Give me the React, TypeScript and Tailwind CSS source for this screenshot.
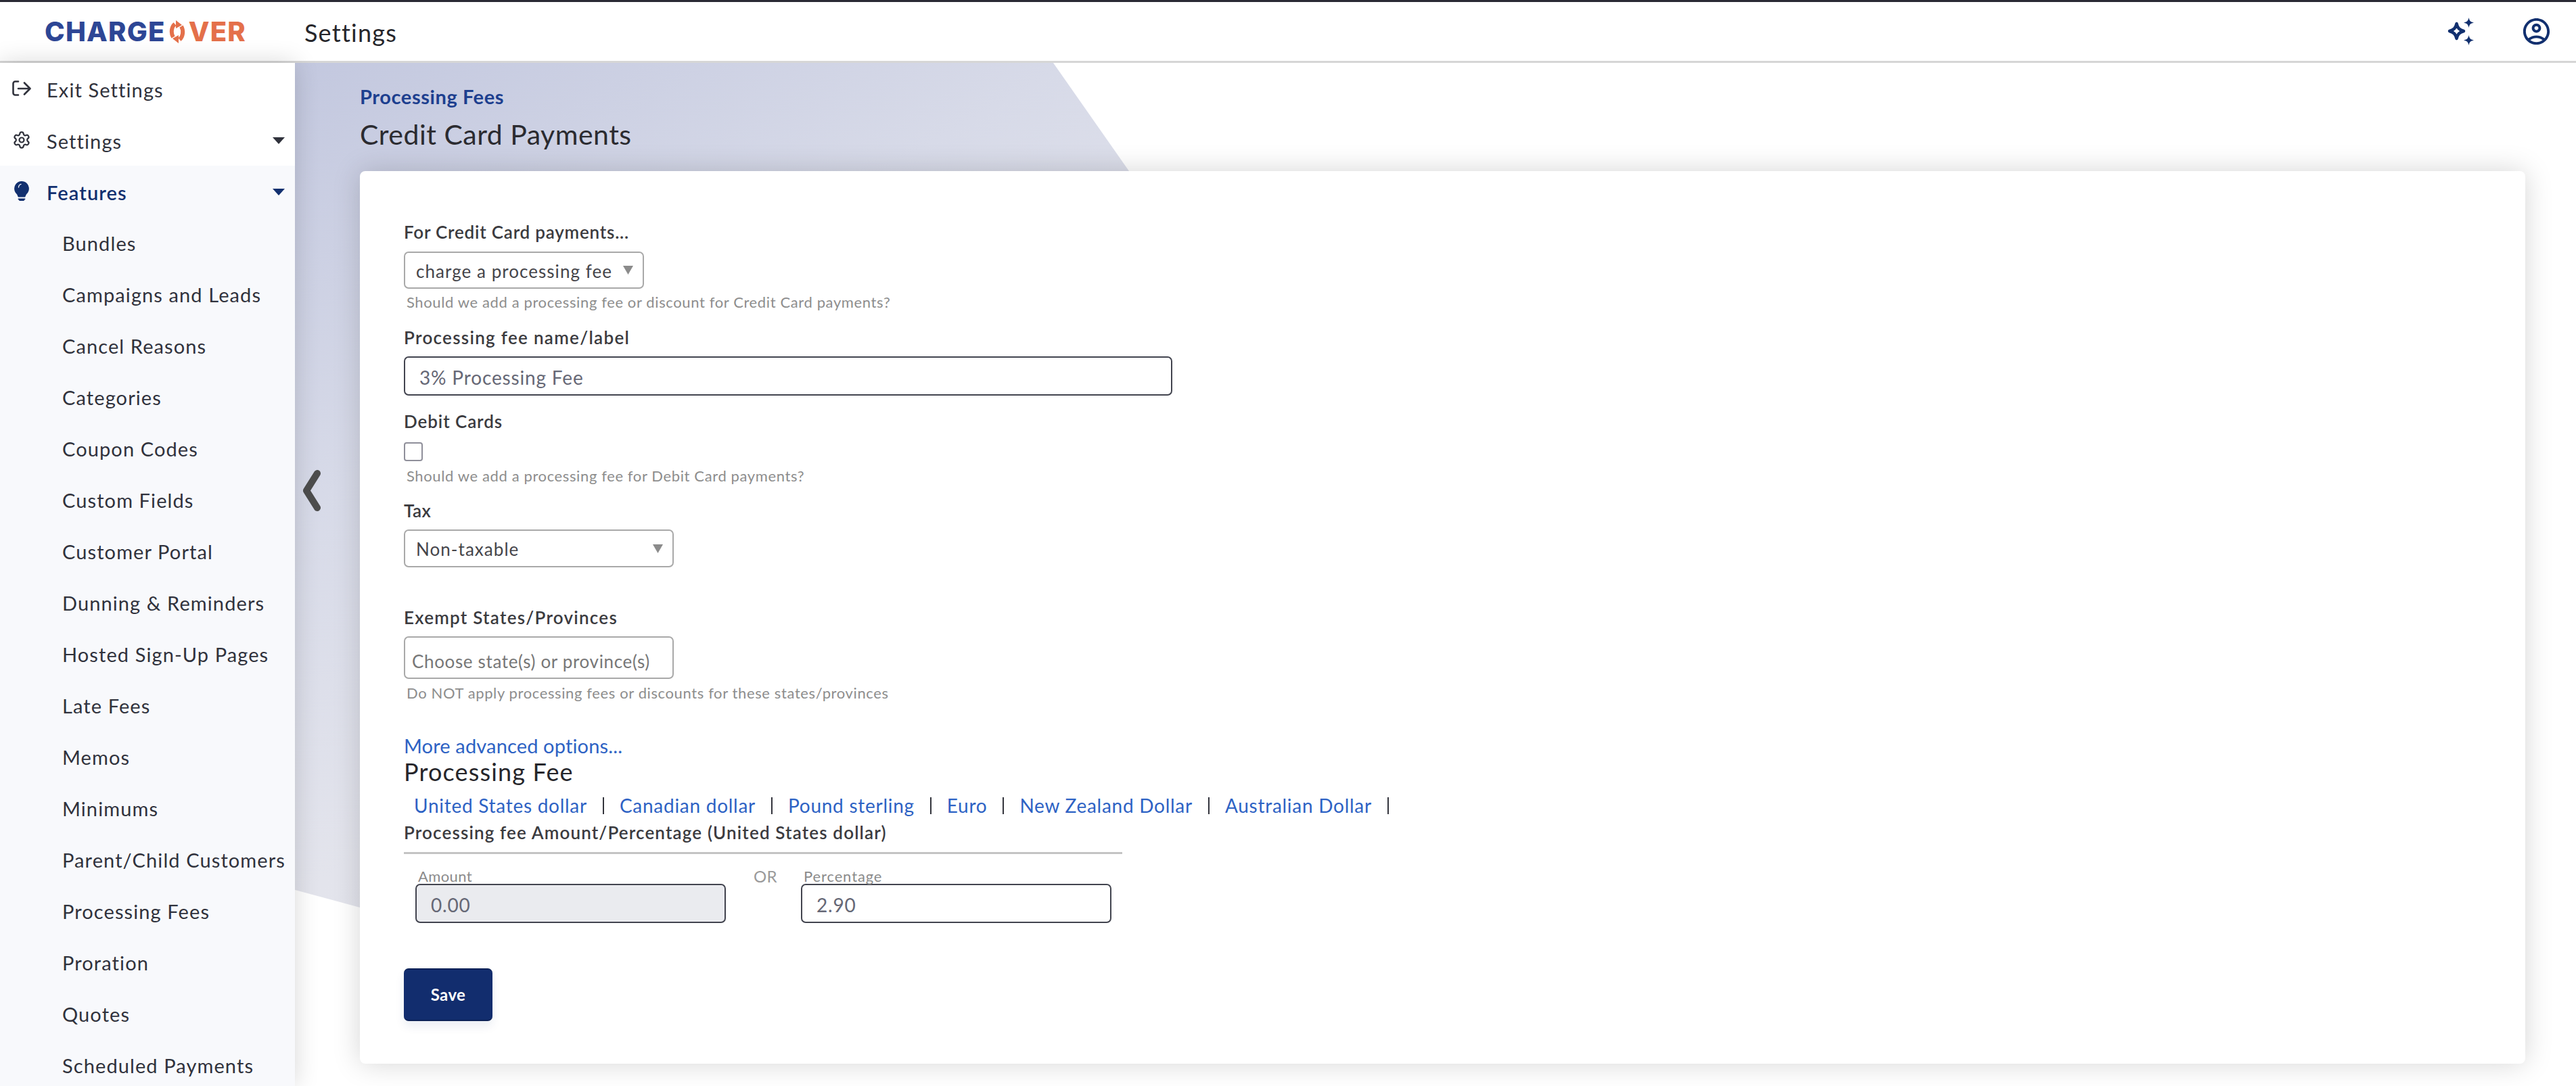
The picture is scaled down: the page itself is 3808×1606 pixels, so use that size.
import { Settings as Gear } from "lucide-react";

const features = [
  "Bundles",
  "Campaigns and Leads",
  "Cancel Reasons",
  "Categories",
  "Coupon Codes",
  "Custom Fields",
  "Customer Portal",
  "Dunning & Reminders",
  "Hosted Sign-Up Pages",
  "Late Fees",
  "Memos",
  "Minimums",
  "Parent/Child Customers",
  "Processing Fees",
  "Proration",
  "Quotes",
  "Scheduled Payments",
];

const currencies = [
  "United States dollar",
  "Canadian dollar",
  "Pound sterling",
  "Euro",
  "New Zealand Dollar",
  "Australian Dollar",
];

const Caret = ({ color }: { color: string }) => (
  <svg width="18" height="10" viewBox="0 0 18 10" className="absolute left-[403px] top-[34px]">
    <path d="M0 0h18L9 10z" fill={color} />
  </svg>
);

// top logo, the O is the two arrows
const Logo = () => (
  <div className="flex items-center h-[40px] font-['Inter',sans-serif] font-extrabold text-[40px] leading-[40px] tracking-[0.03em]">
    <span className="text-[#2d4695]">CHARGE</span>
    <svg width="26" height="34" viewBox="0 0 26 34" className="mx-[4px] shrink-0" fill="#e4704a">
      <path d="M7 25A9.500 13 0 0 1 9.500 5.500" fill="none" stroke="#e4704a" strokeWidth="6" />
      <path d="M19 9A9.500 13 0 0 1 16.500 28.500" fill="none" stroke="#e4704a" strokeWidth="6" />
      <path d="M11 0l9 7-9 5zM15 34l-9-7 9-5z" />
    </svg>
    <span className="text-[#e4704a]">VER</span>
  </div>
);

const Label = ({ children, className = "" }: { children: React.ReactNode; className?: string }) => (
  <div className={`text-[26px] leading-[34px] font-semibold text-[#3b3b3f] ${className}`}>{children}</div>
);

const Help = ({ children, className = "" }: { children: React.ReactNode; className?: string }) => (
  <div className={`ml-[4px] text-[22px] leading-[30px] tracking-[0.028em] text-[#8d8d8d] ${className}`}>{children}</div>
);

const Select = ({ value, className }: { value: string; className: string }) => (
  <div className={`flex items-center justify-between pl-[16px] pr-[14px] border-[2px] border-[#a9a9a9] rounded-[7px] bg-white ${className}`}>
    <span className="pt-[3px] text-[26px] tracking-[0.04em] text-[#45454a]">{value}</span>
    <svg width="15" height="13" viewBox="0 0 15 13">
      <path d="M0 0h15L7.500 13z" fill="#8b8b8b" />
    </svg>
  </div>
);

const TextInput = ({ value, className = "" }: { value: string; className?: string }) => (
  <input
    readOnly
    value={value}
    className={`h-[58px] px-[21px] pt-[3px] border-[2px] border-[#42444f] rounded-[7px] text-[28px] tracking-[0.03em] text-[#666876] outline-none ${className}`}
  />
);

export default function App() {
  return (
    <div className="w-[3808px] h-[1606px] overflow-hidden flex flex-col bg-white font-['Lato',sans-serif] tracking-[0.025em]">
      <header className="h-[93px] shrink-0 flex items-center border-t-[3px] border-t-[#2a2a35] border-b-[3px] border-b-[#d6d6d6] bg-white pl-[66px] pr-[35px]">
        <Logo />
        <div className="ml-[86px] pt-[3px] text-[36px] tracking-[0.035em] text-[#26262b]">Settings</div>
        <div className="ml-auto flex items-center gap-[68px]">
          <svg width="41" height="41" viewBox="0 0 41 41" fill="none">
            <path d="M14.500 9c1.600 6.500 3.500 8.900 10.500 11-7 2.100-8.900 4.500-10.500 11-1.600-6.500-3.500-8.900-10.500-11 7-2.100 8.900-4.500 10.500-11z" stroke="#12306f" strokeWidth="4.500" strokeLinejoin="round" />
            <path d="M32.500 0c1 4.800 2.600 6.500 7.500 7.500-4.900 1-6.500 2.700-7.500 7.500-1-4.800-2.600-6.500-7.500-7.500 4.900-1 6.500-2.700 7.500-7.500zM32.500 26c1 4.800 2.600 6.500 7.500 7.500-4.900 1-6.500 2.700-7.500 7.500-1-4.800-2.600-6.500-7.500-7.500 4.900-1 6.500-2.700 7.500-7.500z" fill="#12306f" />
          </svg>
          <svg width="47" height="47" viewBox="0 0 24 24" fill="#12306f">
            <path d="M12 2C6.480 2 2 6.480 2 12s4.480 10 10 10 10-4.480 10-10S17.520 2 12 2zM7.350 18.500C8.660 17.560 10.260 17 12 17s3.340.56 4.650 1.500c-1.310.94-2.910 1.500-4.650 1.500s-3.340-.56-4.650-1.500zm10.790-1.380C16.450 15.800 14.320 15 12 15s-4.450.8-6.140 2.120C4.700 15.730 4 13.950 4 12c0-4.420 3.580-8 8-8s8 3.580 8 8c0 1.950-.7 3.730-1.860 5.120z" />
            <path d="M12 6c-1.930 0-3.500 1.570-3.500 3.500S10.070 13 12 13s3.500-1.570 3.500-3.500S13.930 6 12 6zm0 5c-.83 0-1.500-.67-1.500-1.500S11.170 8 12 8s1.500.67 1.500 1.500S12.830 11 12 11z" />
          </svg>
        </div>
      </header>

      <div className="flex-1 flex min-h-0">
        <aside className="relative z-20 w-[436px] shrink-0 overflow-hidden bg-[#f8f9fc] text-[29px] tracking-[0.038em] text-[#30323c] shadow-[0_0_34px_rgba(0,0,0,0.16)]">
          <div className="bg-white">
            <div className="relative h-[76px] flex items-center pl-[69px] pt-[3px]">
              <svg width="28" height="24" viewBox="0 0 28 24" fill="none" stroke="#30323c" strokeWidth="2.600" className="absolute left-[18px] top-[26px]" strokeLinecap="round" strokeLinejoin="round">
                <path d="M9 1.500H4.500a3 3 0 0 0-3 3v14a3 3 0 0 0 3 3H9" />
                <path d="M9 12h17M18 3.500l8.500 8.500-8.500 8.500" />
              </svg>
              Exit Settings
            </div>
            <div className="relative h-[76px] flex items-center pl-[69px] pt-[3px]">
              <Gear size={28} strokeWidth={1.900} className="absolute left-[18px] top-[24px]" />
              Settings
              <Caret color="#30323c" />
            </div>
          </div>
          <div className="relative h-[76px] flex items-center pl-[69px] pt-[3px] font-semibold text-[#12306f]">
            <svg width="22" height="29" viewBox="2 0 12 16" fill="#12306f" className="absolute left-[21px] top-[23px]">
              <path d="M2 6a6 6 0 1 1 10.174 4.310c-.203.196-.359.4-.453.619l-.762 1.769A.5.5 0 0 1 10.500 13h-5a.5.5 0 0 1-.46-.302l-.761-1.770a2 2 0 0 0-.453-.618A5.980 5.980 0 0 1 2 6m3 8.500a.5.5 0 0 1 .5-.5h5a.5.5 0 0 1 0 1l-.224.447a1 1 0 0 1-.894.553H6.618a1 1 0 0 1-.894-.553L5.500 15a.5.5 0 0 1-.5-.5" />
              <path d="M5.500 5a2.800 2.800 0 0 1 2-2.600" fill="none" stroke="#f8f9fc" strokeWidth="0.7" strokeLinecap="round" />
            </svg>
            Features
            <Caret color="#12306f" />
          </div>
          {features.map((f) => (
            <div key={f} className="h-[76px] flex items-center pl-[92px] pt-[2px] whitespace-nowrap">
              {f}
            </div>
          ))}
        </aside>

        <main className="relative flex-1 min-w-0 pl-[96px] pr-[75px]">
          {/* slanted backdrop behind the card */}
          <div className="absolute left-0 top-0 w-[1700px] h-[1300px] bg-[linear-gradient(150deg,#c3c8df_0%,#d7dae8_29%,#e3e4ec_54%,#e6e7ee_100%)] [clip-path:polygon(0_0,1121px_0,1611px_700px,96px_1249px,0_1223px)]" />

          {/* collapse arrow */}
          <svg width="26" height="61" viewBox="0 0 26 61" fill="none" className="absolute left-[12px] top-[602px] z-10">
            <path d="M21 5L5 30.500 21 56" stroke="#4d4d4d" strokeWidth="10" strokeLinecap="round" strokeLinejoin="round" />
          </svg>

          <div className="relative">
            <div className="pt-[33px] text-[29px] leading-[34px] font-bold tracking-[0.02em] text-[#1d3f8f]">Processing Fees</div>
            <div className="mt-[14px] text-[41px] leading-[50px] tracking-[0.012em] text-[#2b2b30]">Credit Card Payments</div>

            <div className="mt-[29px] h-[1320px] rounded-[8px] bg-white pl-[65px] pt-[73px] shadow-[0_0_40px_rgba(0,0,0,0.17)]">
              <Label className="tracking-[0.03em]">For Credit Card payments...</Label>
              <Select value="charge a processing fee" className="mt-[12px] w-[355px] h-[55px]" />
              <Help className="mt-[5px]">Should we add a processing fee or discount for Credit Card payments?</Help>

              <Label className="mt-[20px] tracking-[0.05em]">Processing fee name/label</Label>
              <TextInput value="3% Processing Fee" className="mt-[11px] block w-[1136px]" />

              <Label className="mt-[21px] tracking-[0.035em]">Debit Cards</Label>
              <div className="mt-[14px] w-[28px] h-[28px] border-[2px] border-[#8f8f9a] rounded-[4px]" />
              <Help className="mt-[7px]">Should we add a processing fee for Debit Card payments?</Help>

              <Label className="mt-[19px]">Tax</Label>
              <Select value="Non-taxable" className="mt-[11px] w-[399px] h-[56px]" />

              <Label className="mt-[57px] tracking-[0.048em]">Exempt States/Provinces</Label>
              <div className="mt-[11px] w-[399px] h-[63px] flex items-center pl-[10px] pt-[12px] border-[2px] border-[#a9a9a9] rounded-[7px] text-[26px] tracking-[0.025em] text-[#777777]">
                Choose state(s) or province(s)
              </div>
              <Help className="mt-[6px]">Do NOT apply processing fees or discounts for these states/provinces</Help>

              <div className="mt-[46px] text-[29px] leading-[34px] tracking-[0.005em] text-[#2d62c4]">More advanced options...</div>
              <div className="text-[36px] leading-[42px] tracking-[0.032em] text-[#26262b]">Processing Fee</div>

              <div className="mt-[12px] ml-[15px] flex items-center text-[28px] leading-[34px] tracking-[0.026em] text-[#2d62c4]">
                {currencies.map((c) => (
                  <div key={c} className="flex items-center">
                    <span>{c}</span>
                    <span className="mx-[23px] w-[2px] h-[25px] bg-[#33343c]" />
                  </div>
                ))}
              </div>

              <Label className="mt-[6px] tracking-[0.044em]">Processing fee Amount/Percentage (United States dollar)</Label>
              <div className="mt-[12px] w-[1062px] h-[3px] bg-[#c4c4c4]" />

              <div className="mt-[22px] ml-[17px] flex text-[22px] leading-[22px] text-[#8b8b8b]">
                <div className="w-[459px]">
                  <div className="pl-[4px]">Amount</div>
                  <TextInput value="0.00" className="block w-[459px] bg-[#eaebef]" />
                </div>
                <div className="ml-[41px] w-[70px] text-[24px] leading-[22px] text-[#9a9a9a]">OR</div>
                <div className="w-[459px]">
                  <div className="pl-[4px] tracking-[0.04em]">Percentage</div>
                  <TextInput value="2.90" className="block w-[459px]" />
                </div>
              </div>

              <button className="mt-[67px] block w-[131px] h-[78px] rounded-[7px] bg-[#122d6e] border-y-[2px] border-y-[#0c2257] text-white text-[24px] font-bold shadow-[0_8px_14px_rgba(18,45,110,0.08)]">
                Save
              </button>
            </div>
          </div>
        </main>
      </div>
    </div>
  );
}
